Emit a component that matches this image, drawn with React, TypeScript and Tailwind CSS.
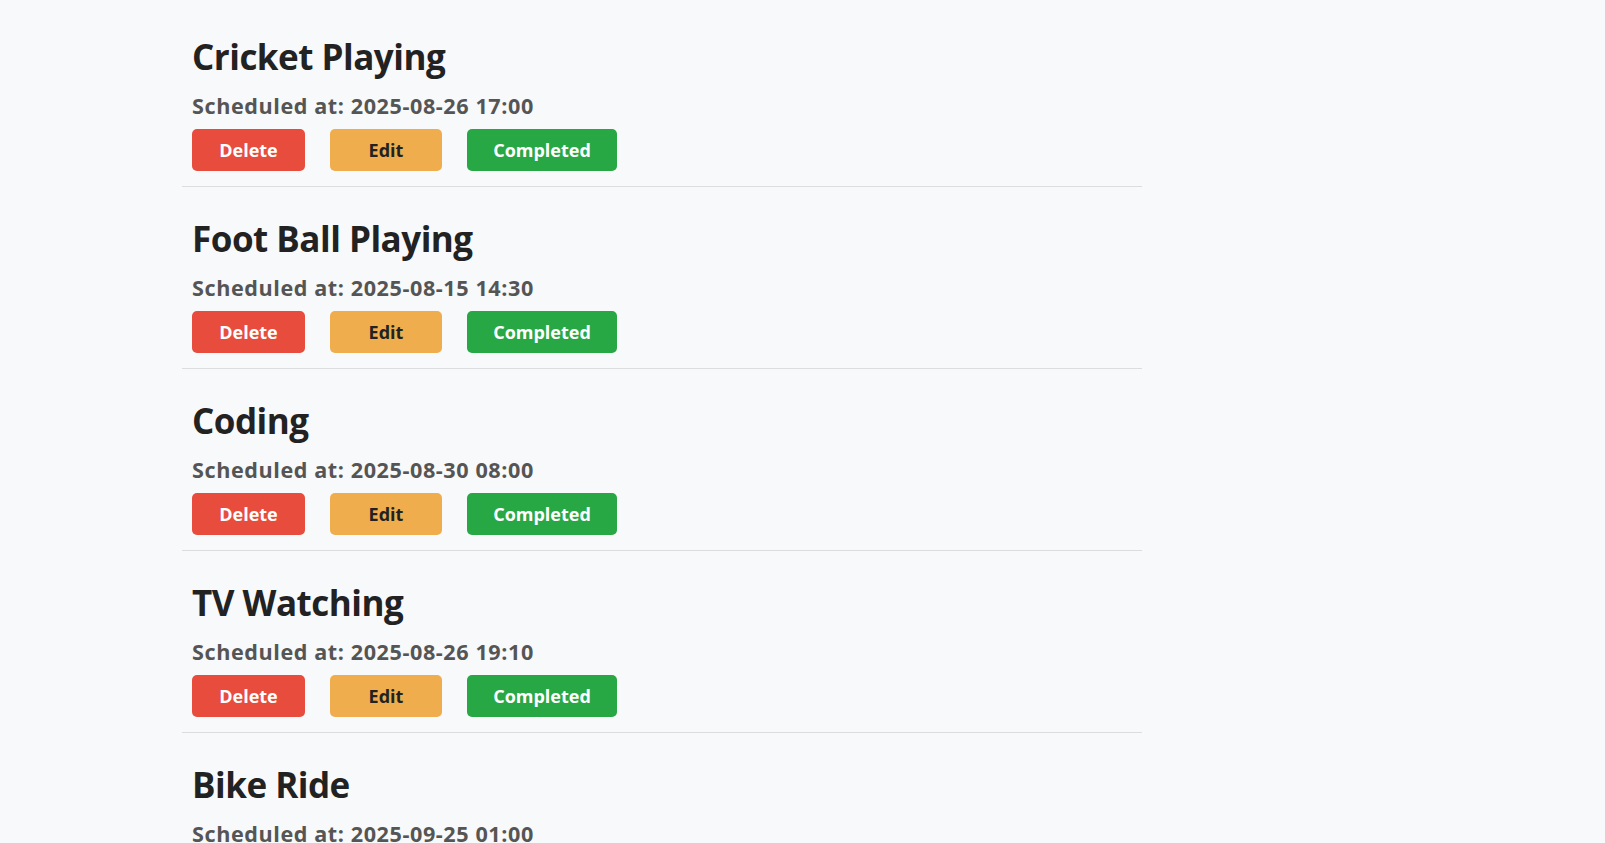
import React from "react";

const tasks = [
  { title: "Cricket Playing", at: "2025-08-26 17:00" },
  { title: "Foot Ball Playing", at: "2025-08-15 14:30" },
  { title: "Coding", at: "2025-08-30 08:00" },
  { title: "TV Watching", at: "2025-08-26 19:10" },
  { title: "Bike Ride", at: "2025-09-25 01:00" },
];

export default function App() {
  return (
    <div
      className="min-h-screen bg-[#f8f9fa] pt-[5px]"
      style={{ fontFamily: '"Open Sans", "Noto Sans", sans-serif' }}
    >
      <div className="ml-[182px] w-[960px]">
        {tasks.map((t) => (
          <div
            key={t.title}
            className="flex flex-col border-b border-[#dddddd] px-[10px] pt-[32px] pb-[15px]"
          >
            <h2 className="m-0 text-[35px] leading-[40px] font-bold tracking-[-0.5px] text-[#222222]">
              {t.title}
            </h2>
            <p className="mt-[15px] text-[21.6px] leading-[28px] font-bold tracking-[0.58px] text-[#555555]">
              Scheduled at: {t.at}
            </p>
            <div className="mt-[9px] flex gap-[25px]">
              <button className="h-[42px] w-[113px] rounded-[5px] bg-[#e74c3c] text-[18px] font-bold text-white">
                Delete
              </button>
              <button className="h-[42px] w-[112px] rounded-[5px] bg-[#f0ad4e] text-[18px] font-bold text-[#222222]">
                Edit
              </button>
              <button className="h-[42px] w-[150px] rounded-[5px] bg-[#28a745] text-[18px] font-bold text-white">
                Completed
              </button>
            </div>
          </div>
        ))}
      </div>
    </div>
  );
}
